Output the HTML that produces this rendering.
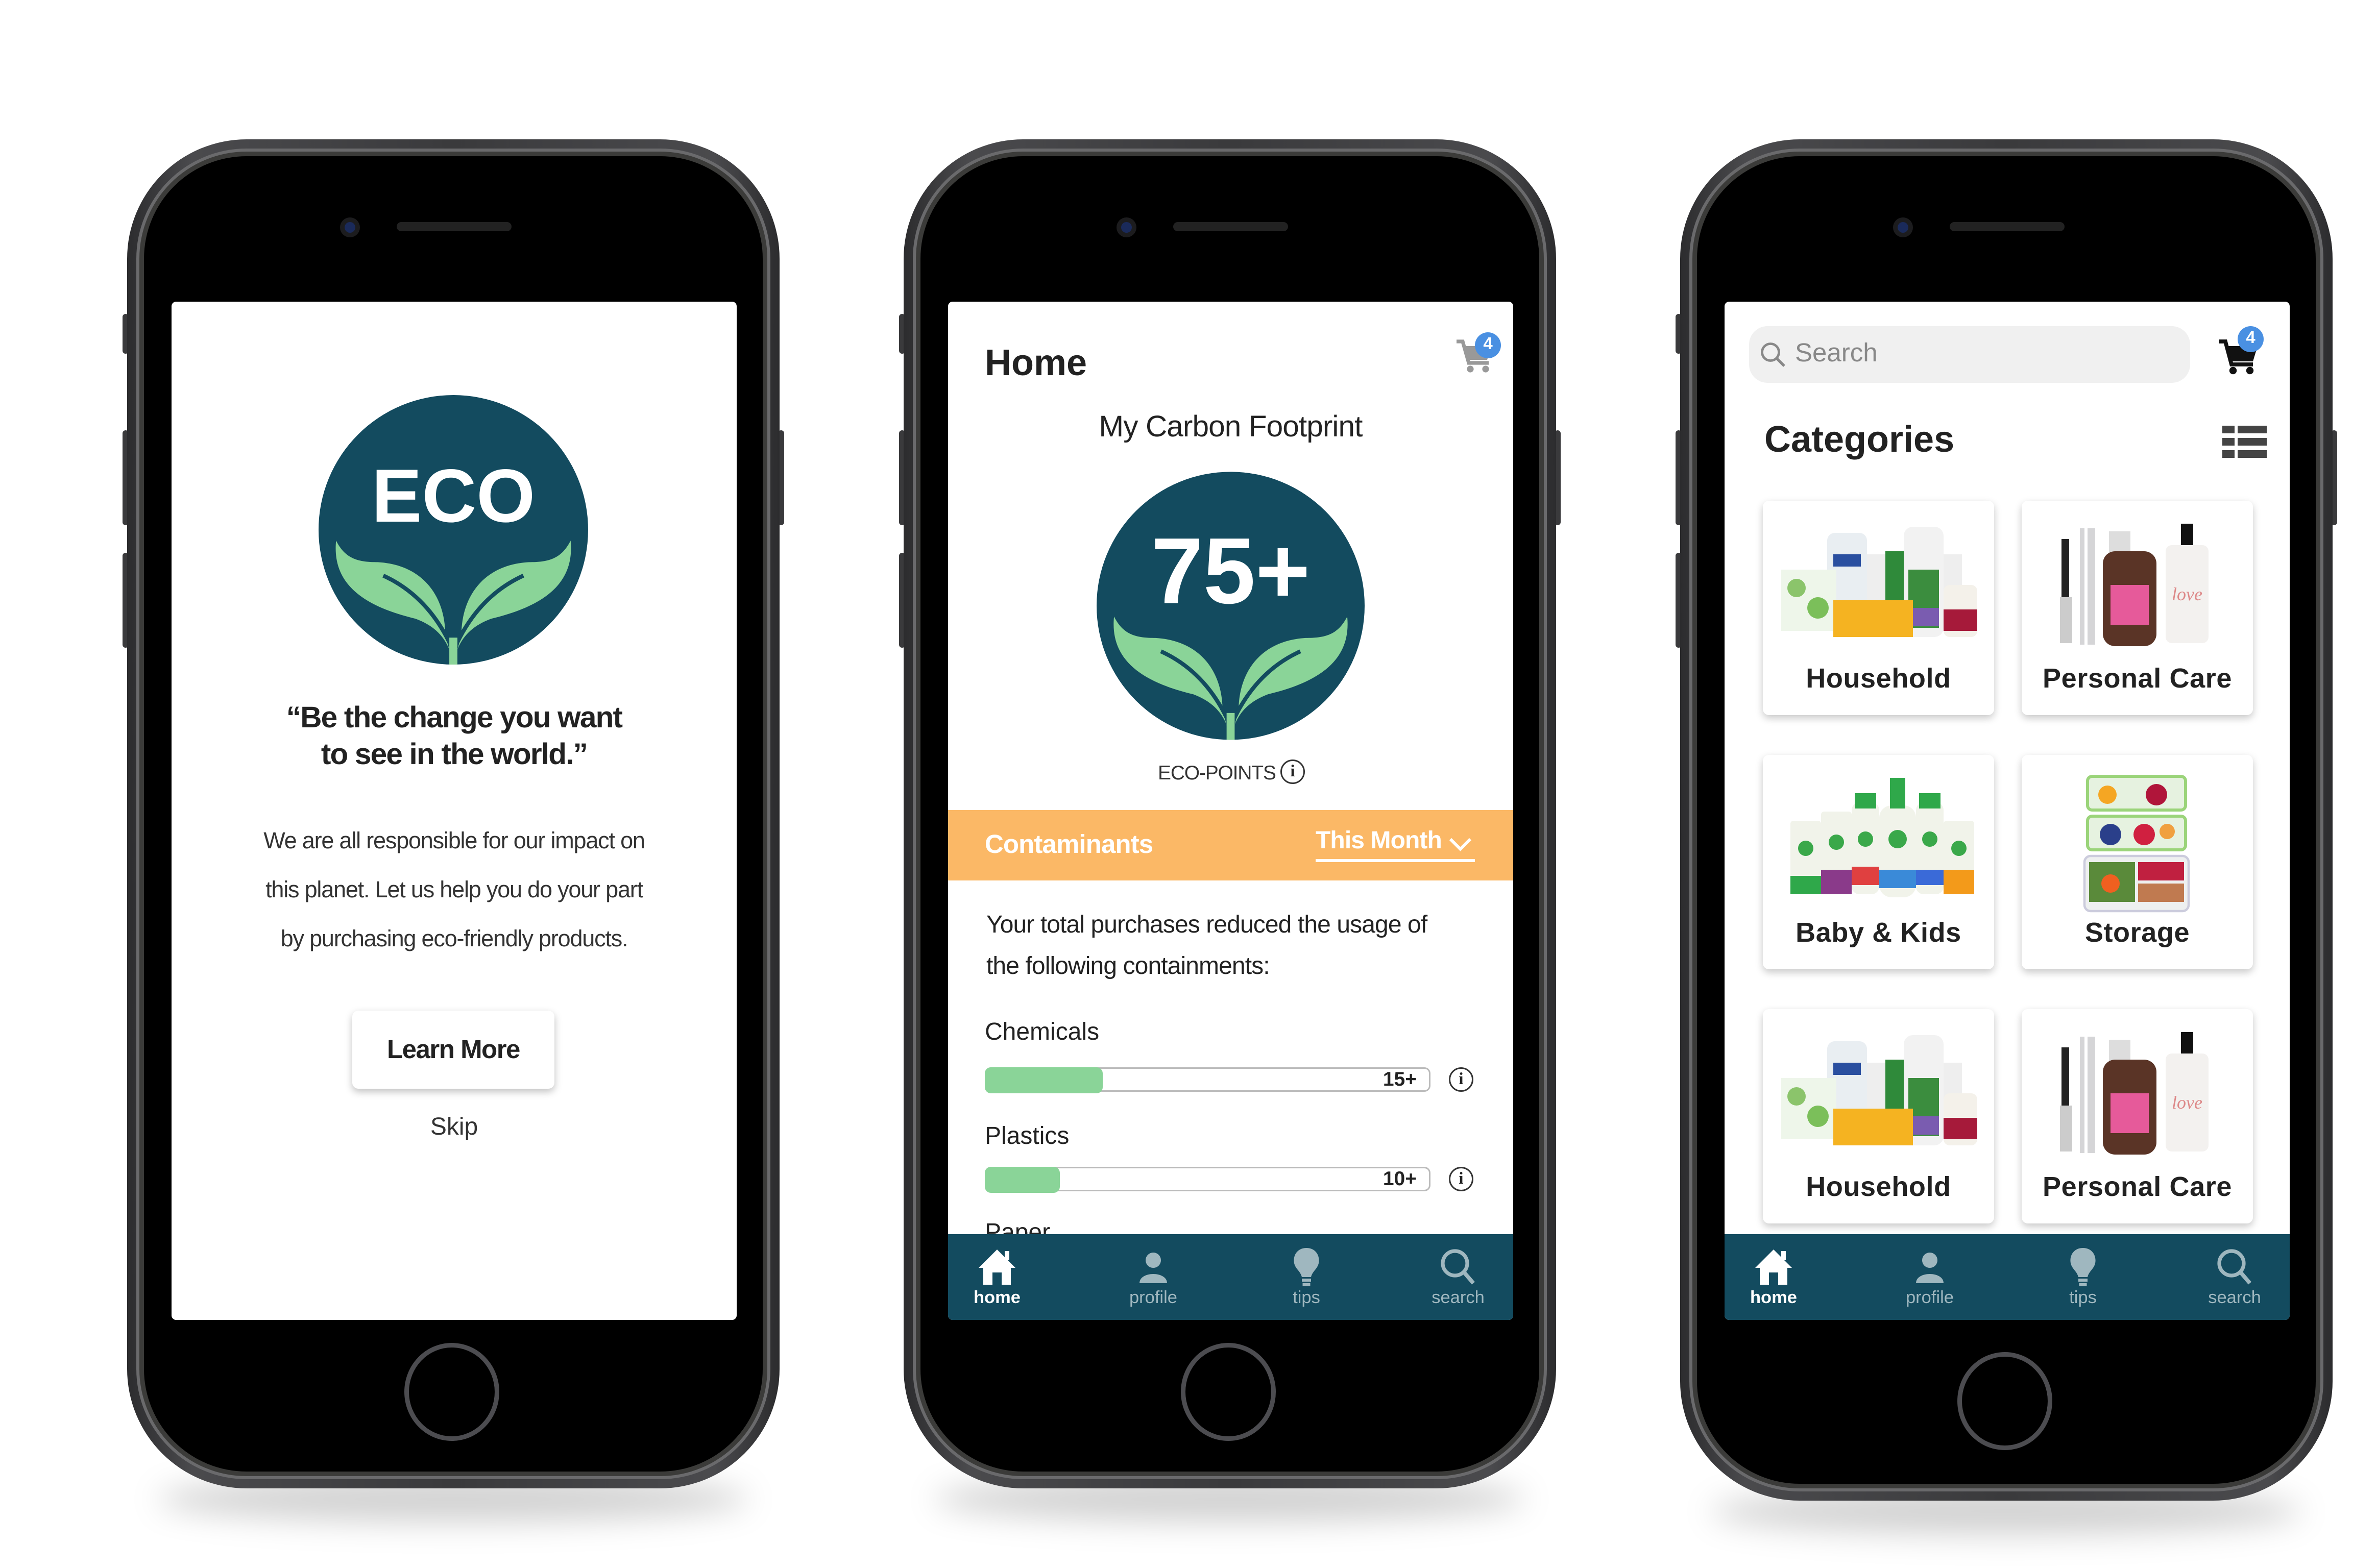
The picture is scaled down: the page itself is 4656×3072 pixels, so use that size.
<!DOCTYPE html>
<html><head><meta charset="utf-8">
<style>
html,body{margin:0;padding:0;background:#fff;}
body{width:4656px;height:3072px;overflow:hidden;position:relative;}
#w{position:absolute;left:0;top:0;width:1552px;height:1024px;transform:scale(3);transform-origin:0 0;font-family:"Liberation Sans",sans-serif;color:#222;}
.ph{position:absolute;width:426px;height:881px;top:91px;}
.shadow{position:absolute;left:20px;right:20px;bottom:-22px;height:30px;border-radius:50%;background:rgba(0,0,0,0.18);filter:blur(10px);}
.body{position:absolute;inset:0;border-radius:78px;background:linear-gradient(90deg,#2c2c2e,#4a4a4d 10%,#3a3a3c 50%,#4a4a4d 90%,#2c2c2e);}
.ring{position:absolute;inset:6px;border-radius:72px;background:#6a6a6c;}
.ring2{position:absolute;inset:8px;border-radius:70px;background:#3b3b39;}
.face{position:absolute;inset:11px;border-radius:67px;background:#000;}
.btn{position:absolute;background:#3a3a3c;border-radius:2px;width:4px;}
.cam{position:absolute;left:139px;top:51px;width:13px;height:13px;border-radius:50%;background:#1c1c1e;}
.cam:after{content:"";position:absolute;left:3px;top:3px;width:7px;height:7px;border-radius:50%;background:#1a2a5a;}
.spk{position:absolute;left:176px;top:54px;width:75px;height:6px;border-radius:3px;background:#222;}
.home{position:absolute;left:181px;top:786px;width:62px;height:64px;border-radius:50%;border:3px solid #4c4c50;box-sizing:border-box;}
.scr{position:absolute;left:29px;top:106px;width:369px;height:665px;background:#fff;border-radius:3px;overflow:hidden;}
.nav{position:absolute;left:0;bottom:0;width:369px;height:56px;background:#134b5f;}
.nav .it{position:absolute;top:8px;width:60px;margin-left:-30px;text-align:center;font-size:11.5px;color:#9fb7bf;}
.nav .it svg{display:block;margin:0 auto 2px;}
.nav .it.on{color:#fff;font-weight:bold;}
.card{position:absolute;width:151px;height:140px;background:#fff;border-radius:4px;box-shadow:0 2px 5px rgba(0,0,0,0.22);}
.card .lb{position:absolute;left:0;right:0;top:106px;text-align:center;font-size:18px;font-weight:bold;color:#222;letter-spacing:0.2px;}
.bar{position:absolute;left:24px;width:291px;height:16px;border:1.5px solid #bbb;border-radius:4px;box-sizing:border-box;background:#fff;}
.bar .f{position:absolute;left:-1px;top:-1.5px;bottom:-1.5px;background:#8ad498;border-radius:4px;}
.bar .v{position:absolute;right:8px;top:0px;font-size:13px;font-weight:bold;line-height:13px;}
.info{position:absolute;width:16px;height:16px;border:1.5px solid #333;border-radius:50%;box-sizing:border-box;font-size:11px;font-weight:bold;text-align:center;line-height:14px;font-family:"Liberation Serif",serif;}
</style></head><body><div id="w">

<!-- SVG logo symbol (not text) -->
<svg width="0" height="0" style="position:absolute">
<defs>
<g id="leaves">
<path d="M0,100 C-3,82 -12,72 -28,66 C-70,56 -90,38 -87,8 C-80,22 -70,24 -56,24 C-22,26 -6,50 -6,78 Z" fill="#8ad498"/>
<path d="M0,100 C3,82 12,72 28,66 C70,56 90,38 87,8 C80,22 70,24 56,24 C22,26 6,50 6,78 Z" fill="#8ad498"/>
<path d="M-52,34 C-30,44 -12,62 0,90" stroke="#134b5f" stroke-width="3" fill="none"/>
<path d="M52,34 C30,44 12,62 0,90" stroke="#134b5f" stroke-width="3" fill="none"/>
<path d="M-3,100 L-3,80 L3,80 L3,100 Z" fill="#8ad498"/>
</g>
</defs>
</svg>

<!-- PHONE 1 -->
<div class="ph" style="left:83px;">
 <div class="shadow"></div>
 <div class="btn" style="left:-3px;top:114px;height:26px"></div>
 <div class="btn" style="left:-3px;top:190px;height:62px"></div>
 <div class="btn" style="left:-3px;top:270px;height:62px"></div>
 <div class="btn" style="right:-3px;top:190px;height:62px"></div>
 <div class="body"></div><div class="ring"></div><div class="ring2"></div><div class="face"></div>
 <div class="cam"></div><div class="spk"></div><div class="home"></div>
 <div class="scr">
  <svg style="position:absolute;left:96px;top:61px" width="176" height="176" viewBox="-100 -100 200 200">
   <circle r="100" fill="#134b5f"/>
   <text x="0" y="-6" text-anchor="middle" font-family="Liberation Sans" font-weight="bold" font-size="56" fill="#fff">ECO</text>
   <use href="#leaves"/>
  </svg>
  <div style="position:absolute;left:0;right:0;top:260px;text-align:center;font-size:19.5px;line-height:24px;font-weight:bold;letter-spacing:-0.6px;color:#222;">“Be the change you want<br>to see in the world.”</div>
  <div style="position:absolute;left:0;right:0;top:337px;text-align:center;font-size:15px;line-height:32px;color:#333;letter-spacing:-0.4px;">We are all responsible for our impact on<br>this planet. Let us help you do your part<br>by purchasing eco-friendly products.</div>
  <div style="position:absolute;left:118px;top:463px;width:132px;height:51px;border-radius:4px;background:#fff;box-shadow:0 2px 5px rgba(0,0,0,0.25);text-align:center;line-height:51px;font-size:17px;font-weight:bold;letter-spacing:-0.5px;">Learn More</div>
  <div style="position:absolute;left:0;right:0;top:531px;text-align:center;font-size:16px;color:#333;">Skip</div>
 </div>
</div>

<!-- PHONE 2 -->
<div class="ph" style="left:590px;">
 <div class="shadow"></div>
 <div class="btn" style="left:-3px;top:114px;height:26px"></div>
 <div class="btn" style="left:-3px;top:190px;height:62px"></div>
 <div class="btn" style="left:-3px;top:270px;height:62px"></div>
 <div class="btn" style="right:-3px;top:190px;height:62px"></div>
 <div class="body"></div><div class="ring"></div><div class="ring2"></div><div class="face"></div>
 <div class="cam"></div><div class="spk"></div><div class="home"></div>
 <div class="scr">
  <div style="position:absolute;left:24px;top:27px;font-size:24px;font-weight:bold;color:#222;">Home</div>
  <svg style="position:absolute;left:331px;top:24px" width="26" height="24" viewBox="0 0 26 24"><path d="M1,2 H5 L9,16 H22" stroke="#999" stroke-width="2.4" fill="none"/><path d="M6,5 H24 L21,14 H9 Z" fill="#999"/><circle cx="10" cy="20" r="2.2" fill="#999"/><circle cx="20" cy="20" r="2.2" fill="#999"/></svg>
  <div style="position:absolute;left:344px;top:20px;width:17px;height:17px;border-radius:50%;background:#4a90e2;color:#fff;font-size:11px;font-weight:bold;text-align:center;line-height:17px;">4</div>
  <div style="position:absolute;left:0;right:0;top:71px;text-align:center;font-size:19.5px;color:#222;letter-spacing:-0.3px;">My Carbon Footprint</div>
  <svg style="position:absolute;left:97px;top:111px" width="175" height="177" viewBox="-100 -100 200 202">
   <circle r="100" fill="#134b5f"/>
   <text x="0" y="-2" text-anchor="middle" font-family="Liberation Sans" font-weight="bold" font-size="70" fill="#fff">75+</text>
   <use href="#leaves"/>
  </svg>
  <div style="position:absolute;left:137px;top:300px;font-size:13px;color:#333;letter-spacing:-0.4px;">ECO-POINTS</div>
  <div class="info" style="left:217px;top:299px;">i</div>
  <div style="position:absolute;left:0;top:332px;width:369px;height:46px;background:#fbb866;">
   <div style="position:absolute;left:24px;top:13px;font-size:17px;font-weight:bold;color:#fff;letter-spacing:-0.3px;">Contaminants</div>
   <div style="position:absolute;left:240px;top:12px;width:104px;height:20px;border-bottom:2px solid #fff;font-size:16px;font-weight:bold;color:#fff;letter-spacing:-0.3px;">This Month
    <svg style="position:absolute;right:2px;top:6px" width="15" height="9" viewBox="0 0 15 9"><path d="M1,1 L7.5,7.5 L14,1" stroke="#fff" stroke-width="2" fill="none"/></svg></div>
  </div>
  <div style="position:absolute;left:25px;top:394px;font-size:16px;line-height:27px;color:#222;letter-spacing:-0.3px;">Your total purchases reduced the usage of<br>the following containments:</div>
  <div style="position:absolute;left:24px;top:469px;font-size:16px;color:#222;">Chemicals</div>
  <div class="bar" style="top:500px;"><div class="f" style="width:77px"></div><div class="v">15+</div></div>
  <div class="info" style="left:327px;top:500px;">i</div>
  <div style="position:absolute;left:24px;top:537px;font-size:16px;color:#222;">Plastics</div>
  <div class="bar" style="top:565px;"><div class="f" style="width:49px"></div><div class="v">10+</div></div>
  <div class="info" style="left:327px;top:565px;">i</div>
  <div style="position:absolute;left:24px;top:600px;font-size:16px;color:#222;">Paper</div>
  <div class="nav">
   <div class="it on" style="left:32px"><svg width="26" height="26" viewBox="0 0 26 26"><path d="M13,2 L25,14 H22 V25 H16 V17 H10 V25 H4 V14 H1 Z" fill="#fff"/><rect x="18" y="3" width="3" height="6" fill="#fff"/></svg>home</div>
   <div class="it" style="left:134px"><svg width="26" height="26" viewBox="0 0 26 26"><circle cx="13" cy="9" r="5" fill="#9fb7bf"/><path d="M4,24 C4,16 22,16 22,24 Z" fill="#9fb7bf"/></svg>profile</div>
   <div class="it" style="left:234px"><svg width="26" height="26" viewBox="0 0 26 26"><path d="M13,1 C19,1 22,6 21,11 C20,15 17,16 16,20 H10 C9,16 6,15 5,11 C4,6 7,1 13,1 Z" fill="#9fb7bf"/><rect x="10" y="21" width="6" height="2" fill="#9fb7bf"/><rect x="10.5" y="24" width="5" height="2" fill="#9fb7bf"/></svg>tips</div>
   <div class="it" style="left:333px"><svg width="26" height="26" viewBox="0 0 26 26"><circle cx="11" cy="11" r="8" stroke="#9fb7bf" stroke-width="2.4" fill="none"/><path d="M17,17 L23,24" stroke="#9fb7bf" stroke-width="2.6"/></svg>search</div>
  </div>
 </div>
</div>

<!-- PHONE 3 -->
<div class="ph" style="left:1097px;height:889px;">
 <div class="shadow"></div>
 <div class="btn" style="left:-3px;top:114px;height:26px"></div>
 <div class="btn" style="left:-3px;top:190px;height:62px"></div>
 <div class="btn" style="left:-3px;top:270px;height:62px"></div>
 <div class="btn" style="right:-3px;top:190px;height:62px"></div>
 <div class="body"></div><div class="ring"></div><div class="ring2"></div><div class="face"></div>
 <div class="cam"></div><div class="spk"></div><div class="home" style="top:792px"></div>
 <div class="scr">
  <div style="position:absolute;left:16px;top:16px;width:288px;height:37px;border-radius:12px;background:#f0f0f0;">
   <svg style="position:absolute;left:7px;top:10px" width="17" height="17" viewBox="0 0 17 17"><circle cx="7" cy="7" r="5.5" stroke="#888" stroke-width="1.6" fill="none"/><path d="M11,11 L16,16" stroke="#888" stroke-width="1.8"/></svg>
   <div style="position:absolute;left:30px;top:8px;font-size:17px;color:#888;">Search</div>
  </div>
  <svg style="position:absolute;left:322px;top:24px" width="28" height="25" viewBox="0 0 28 25"><path d="M1,2 H5 L9,17 H23" stroke="#111" stroke-width="2.6" fill="none"/><path d="M6,5 H26 L23,15 H9 Z" fill="#111"/><circle cx="10" cy="21" r="2.4" fill="#111"/><circle cx="21" cy="21" r="2.4" fill="#111"/></svg>
  <div style="position:absolute;left:335px;top:16px;width:17px;height:17px;border-radius:50%;background:#4a90e2;color:#fff;font-size:11px;font-weight:bold;text-align:center;line-height:17px;">4</div>
  <div style="position:absolute;left:26px;top:77px;font-size:24px;font-weight:bold;color:#222;">Categories</div>
  <svg style="position:absolute;left:325px;top:81px" width="29" height="21" viewBox="0 0 29 21"><g fill="#444"><rect x="0" y="0" width="8" height="5"/><rect x="10" y="0" width="19" height="5"/><rect x="0" y="8" width="8" height="5"/><rect x="10" y="8" width="19" height="5"/><rect x="0" y="16" width="8" height="5"/><rect x="10" y="16" width="19" height="5"/></g></svg>

  <!-- cards -->
  <div class="card" style="left:25px;top:130px;">
   <svg style="position:absolute;left:10px;top:15px" width="132" height="78" viewBox="0 0 132 78">
    <rect x="40" y="20" width="80" height="45" fill="#eee"/>
    <rect x="32" y="6" width="26" height="62" rx="5" fill="#e9eef2"/><rect x="36" y="20" width="18" height="8" fill="#2a4fa0"/>
    <rect x="70" y="18" width="24" height="55" fill="#2f8a3a"/>
    <rect x="82" y="2" width="26" height="72" rx="6" fill="#f2f2f2"/><rect x="85" y="30" width="20" height="38" fill="#3b8d3e"/><rect x="85" y="55" width="20" height="12" fill="#7a5cb0"/>
    <rect x="2" y="30" width="36" height="40" fill="#eef6ea"/><circle cx="12" cy="42" r="6" fill="#8bc46b"/><circle cx="26" cy="55" r="7" fill="#7bbf5a"/>
    <rect x="36" y="50" width="52" height="24" fill="#f5b321"/>
    <rect x="108" y="40" width="22" height="34" rx="4" fill="#f4f1ea"/><rect x="108" y="56" width="22" height="14" fill="#a61a3a"/>
   </svg>
   <div class="lb">Household</div>
  </div>
  <div class="card" style="left:194px;top:130px;">
   <svg style="position:absolute;left:24px;top:15px" width="100" height="82" viewBox="0 0 100 82">
    <rect x="2" y="10" width="5" height="40" fill="#222"/><rect x="1" y="48" width="8" height="30" fill="#ccc"/>
    <rect x="14" y="3" width="10" height="76" fill="#d5d5d7"/><rect x="17" y="3" width="2" height="76" fill="#fff"/>
    <rect x="33" y="5" width="14" height="16" fill="#ddd"/><rect x="29" y="18" width="35" height="62" rx="8" fill="#5a3426"/><rect x="34" y="40" width="25" height="26" fill="#e65a9a"/>
    <rect x="80" y="0" width="8" height="14" fill="#111"/><rect x="70" y="14" width="28" height="64" rx="4" fill="#f3f1ef"/><text x="84" y="50" font-size="12" text-anchor="middle" fill="#d88" font-family="Liberation Serif" font-style="italic">love</text>
   </svg>
   <div class="lb">Personal Care</div>
  </div>
  <div class="card" style="left:25px;top:296px;">
   <svg style="position:absolute;left:16px;top:15px" width="124" height="80" viewBox="0 0 124 80">
    <g><rect x="2" y="28" width="20" height="48" rx="2" fill="#f1f3ea"/><rect x="2" y="64" width="20" height="12" fill="#2fa84a"/>
    <rect x="22" y="22" width="20" height="54" rx="2" fill="#f1f3ea"/><rect x="22" y="60" width="20" height="16" fill="#8a3a8a"/>
    <rect x="42" y="16" width="18" height="60" rx="5" fill="#f1f3ea"/><rect x="44" y="10" width="14" height="10" fill="#2fa84a"/><rect x="42" y="58" width="18" height="12" fill="#e04040"/>
    <rect x="60" y="18" width="24" height="60" rx="8" fill="#f1f3ea"/><rect x="67" y="0" width="10" height="20" fill="#2fa84a"/><rect x="60" y="60" width="24" height="12" fill="#3a8ad8"/>
    <rect x="84" y="16" width="18" height="60" rx="5" fill="#f1f3ea"/><rect x="86" y="10" width="14" height="10" fill="#2fa84a"/><rect x="84" y="60" width="18" height="10" fill="#3a6ad8"/>
    <rect x="102" y="28" width="20" height="48" rx="2" fill="#f1f3ea"/><rect x="102" y="60" width="20" height="16" fill="#f39a1a"/>
    <circle cx="12" cy="46" r="5" fill="#3aa84a"/><circle cx="32" cy="42" r="5" fill="#3aa84a"/><circle cx="51" cy="40" r="5" fill="#3aa84a"/><circle cx="72" cy="40" r="6" fill="#3aa84a"/><circle cx="93" cy="40" r="5" fill="#3aa84a"/><circle cx="112" cy="46" r="5" fill="#3aa84a"/></g>
   </svg>
   <div class="lb">Baby &amp; Kids</div>
  </div>
  <div class="card" style="left:194px;top:296px;">
   <svg style="position:absolute;left:40px;top:12px" width="70" height="92" viewBox="0 0 70 92">
    <rect x="3" y="2" width="64" height="22" rx="3" fill="#e6f2e0" stroke="#9bd47a" stroke-width="2"/><circle cx="16" cy="14" r="6" fill="#f5a623"/><circle cx="48" cy="14" r="7" fill="#b0153a"/>
    <rect x="3" y="28" width="64" height="22" rx="3" fill="#e6f2e0" stroke="#9bd47a" stroke-width="2"/><circle cx="18" cy="40" r="7" fill="#2a3f8a"/><circle cx="40" cy="40" r="7" fill="#d02040"/><circle cx="55" cy="38" r="5" fill="#f0a040"/>
    <rect x="1" y="54" width="68" height="36" rx="4" fill="#eef0f0" stroke="#ccd" stroke-width="1.5"/><rect x="4" y="58" width="30" height="26" fill="#5a8a3a"/><circle cx="18" cy="72" r="6" fill="#f06020"/><rect x="36" y="58" width="30" height="12" fill="#c02040"/><rect x="36" y="72" width="30" height="12" fill="#c07a50"/>
   </svg>
   <div class="lb">Storage</div>
  </div>
  <div class="card" style="left:25px;top:462px;">
   <svg style="position:absolute;left:10px;top:15px" width="132" height="78" viewBox="0 0 132 78">
    <rect x="40" y="20" width="80" height="45" fill="#eee"/>
    <rect x="32" y="6" width="26" height="62" rx="5" fill="#e9eef2"/><rect x="36" y="20" width="18" height="8" fill="#2a4fa0"/>
    <rect x="70" y="18" width="24" height="55" fill="#2f8a3a"/>
    <rect x="82" y="2" width="26" height="72" rx="6" fill="#f2f2f2"/><rect x="85" y="30" width="20" height="38" fill="#3b8d3e"/><rect x="85" y="55" width="20" height="12" fill="#7a5cb0"/>
    <rect x="2" y="30" width="36" height="40" fill="#eef6ea"/><circle cx="12" cy="42" r="6" fill="#8bc46b"/><circle cx="26" cy="55" r="7" fill="#7bbf5a"/>
    <rect x="36" y="50" width="52" height="24" fill="#f5b321"/>
    <rect x="108" y="40" width="22" height="34" rx="4" fill="#f4f1ea"/><rect x="108" y="56" width="22" height="14" fill="#a61a3a"/>
   </svg>
   <div class="lb">Household</div>
  </div>
  <div class="card" style="left:194px;top:462px;">
   <svg style="position:absolute;left:24px;top:15px" width="100" height="82" viewBox="0 0 100 82">
    <rect x="2" y="10" width="5" height="40" fill="#222"/><rect x="1" y="48" width="8" height="30" fill="#ccc"/>
    <rect x="14" y="3" width="10" height="76" fill="#d5d5d7"/><rect x="17" y="3" width="2" height="76" fill="#fff"/>
    <rect x="33" y="5" width="14" height="16" fill="#ddd"/><rect x="29" y="18" width="35" height="62" rx="8" fill="#5a3426"/><rect x="34" y="40" width="25" height="26" fill="#e65a9a"/>
    <rect x="80" y="0" width="8" height="14" fill="#111"/><rect x="70" y="14" width="28" height="64" rx="4" fill="#f3f1ef"/><text x="84" y="50" font-size="12" text-anchor="middle" fill="#d88" font-family="Liberation Serif" font-style="italic">love</text>
   </svg>
   <div class="lb">Personal Care</div>
  </div>

  <div class="nav">
   <div class="it on" style="left:32px"><svg width="26" height="26" viewBox="0 0 26 26"><path d="M13,2 L25,14 H22 V25 H16 V17 H10 V25 H4 V14 H1 Z" fill="#fff"/><rect x="18" y="3" width="3" height="6" fill="#fff"/></svg>home</div>
   <div class="it" style="left:134px"><svg width="26" height="26" viewBox="0 0 26 26"><circle cx="13" cy="9" r="5" fill="#9fb7bf"/><path d="M4,24 C4,16 22,16 22,24 Z" fill="#9fb7bf"/></svg>profile</div>
   <div class="it" style="left:234px"><svg width="26" height="26" viewBox="0 0 26 26"><path d="M13,1 C19,1 22,6 21,11 C20,15 17,16 16,20 H10 C9,16 6,15 5,11 C4,6 7,1 13,1 Z" fill="#9fb7bf"/><rect x="10" y="21" width="6" height="2" fill="#9fb7bf"/><rect x="10.5" y="24" width="5" height="2" fill="#9fb7bf"/></svg>tips</div>
   <div class="it" style="left:333px"><svg width="26" height="26" viewBox="0 0 26 26"><circle cx="11" cy="11" r="8" stroke="#9fb7bf" stroke-width="2.4" fill="none"/><path d="M17,17 L23,24" stroke="#9fb7bf" stroke-width="2.6"/></svg>search</div>
  </div>
 </div>
</div>

</div></body></html>
